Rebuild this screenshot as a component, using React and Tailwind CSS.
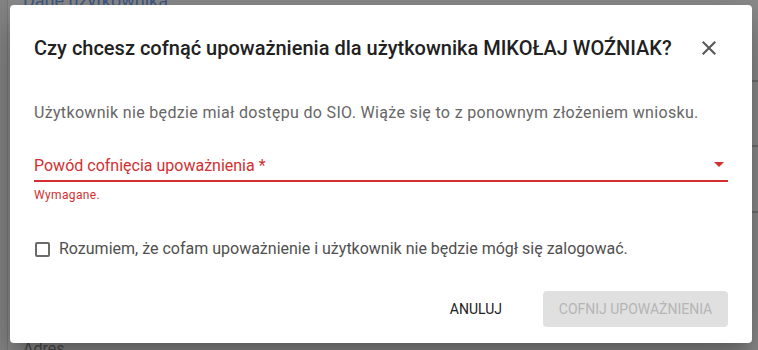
import React from "react";

const font = { fontFamily: "Roboto, 'Liberation Sans', sans-serif" };

const CloseIcon = () => (
    <svg viewBox="0 0 24 24" className="h-6 w-6" fill="#555">
        <path d="M19 6.41 17.59 5 12 10.59 6.41 5 5 6.41 10.59 12 5 17.59 6.41 19 12 13.41 17.59 19 19 17.59 13.41 12z" />
    </svg>
);

const ArrowDropDown = () => (
    <svg viewBox="0 0 24 24" className="h-6 w-6" fill="#d32f2f">
        <path d="M7 10l5 5 5-5z" />
    </svg>
);

const App = () => {
    return (
        <div className="relative h-[350px] w-full overflow-hidden bg-[#8c8c8c] font-[Roboto]">
            {/* page behind the backdrop */}
            <div className="flex h-full">
                <div className="w-[8px] border-r border-[#7a7a7a] bg-[#868686]" />
                <div className="flex flex-1 flex-col">
                    <div className="-mt-[9px] pl-[15px] text-[18px] leading-[20px] text-[#3d5a86]">Dane użytkownika</div>
                    <div className="flex-1" />
                    <div className="-mb-[9px] pl-[15px] text-[16px] leading-[20px] text-[#4e4e4e]">Adres</div>
                </div>
            </div>
            <div className="absolute right-0 top-[80px] h-[2px] w-[8px] bg-[#6f6f6f]" />
            <div className="absolute right-0 top-[145px] h-[2px] w-[8px] bg-[#6f6f6f]" />
            <div className="absolute right-0 top-[211px] h-[2px] w-[8px] bg-[#6f6f6f]" />

            {/* dialog */}
            <div
                className="absolute left-[10px] top-[5px] flex h-[338px] w-[742px] flex-col rounded-[4px] bg-white px-6 shadow-[0_11px_15px_-7px_rgba(0,0,0,0.2),0_24px_38px_3px_rgba(0,0,0,0.14),0_9px_46px_8px_rgba(0,0,0,0.12)]"
                style={font}
            >
                <div className="mt-[27px] flex h-8 items-center justify-between">
                    <h2 className="text-[20px] font-medium leading-8 text-[#212121]">
                        Czy chcesz cofnąć upoważnienia dla użytkownika MIKOŁAJ WOŹNIAK?
                    </h2>
                    <button className="mr-[7px]">
                        <CloseIcon />
                    </button>
                </div>

                <p className="mt-[37px] text-[16px] leading-6 tracking-[0.33px] text-[#666666]">
                    Użytkownik nie będzie miał dostępu do SIO. Wiąże się to z ponownym złożeniem wniosku.
                </p>

                {/* select field */}
                <div className="mt-[29px]">
                    <div className="flex h-[28px] items-start justify-between border-b-2 border-[#d32f2f]">
                        <span className="text-[16px] leading-6 text-[#d32f2f]">Powód cofnięcia upoważnienia *</span>
                        <span className="-mt-[2px] -mr-[3px]">
                            <ArrowDropDown />
                        </span>
                    </div>
                    <div className="mt-[3px] text-[12px] leading-[20px] tracking-[0.03em] text-[#d32f2f]">Wymagane.</div>
                </div>

                {/* checkbox */}
                <label className="mt-[32px] flex items-center gap-[9px]">
                    <span className="ml-[1px] h-[15px] w-[15px] rounded-[2px] border-2 border-[#6b6b6b]" />
                    <span className="text-[16px] leading-6 text-[#4f4f4f]">
                        Rozumiem, że cofam upoważnienie i użytkownik nie będzie mógł się zalogować.
                    </span>
                </label>

                {/* actions */}
                <div className="mt-auto mb-[16px] flex items-center justify-end gap-[33px]">
                    <button className="h-9 px-2 text-[14px] font-normal uppercase text-[#212121]">
                        Anuluj
                    </button>
                    <button
                        disabled
                        className="h-9 w-[185px] rounded-[4px] bg-[#e0e0e0] text-[14px] font-normal uppercase text-[#b5b5b5]"
                    >
                        Cofnij upoważnienia
                    </button>
                </div>
            </div>
        </div>
    );
};

export default App;
